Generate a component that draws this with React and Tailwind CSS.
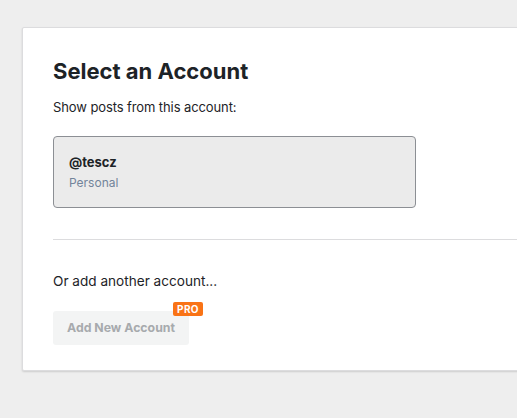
export default function App() {
  return (
    <div className="w-[517px] h-[418px] overflow-hidden bg-[#eeeeee] pt-[27px] pl-[22px] font-['Inter','Liberation_Sans',Arial,sans-serif]">
      <div className="w-[600px] h-[344px] bg-white border border-[#dcdcde] rounded-[2px] shadow-[0_1px_2px_rgba(0,0,0,0.14)] pl-[30px] pt-[29px]">
        <h2 className="text-[22px] leading-[28px] font-bold text-[#1d2327]">Select an Account</h2>
        <p className="mt-[12px] text-[13px] leading-[20px] text-[#1d2327] tracking-[-0.1px]">Show posts from this account:</p>
        <div className="mt-[19px] w-[363px] h-[72px] bg-[#ebebeb] border border-[#8c8f94] rounded-[4px] pl-[15px] pt-[15px]">
          <div className="text-[13px] leading-[20px] font-bold text-[#1d2327]">@tescz</div>
          <div className="mt-[2px] text-[12px] leading-[18px] text-[#72849a]">Personal</div>
        </div>
        <div className="mt-[31px] h-px bg-[#dcdcde]"></div>
        <p className="mt-[31px] text-[13.6px] leading-[20px] text-[#1d2327]">Or add another account...</p>
        <div className="relative mt-[20px] w-[136px]">
          <button className="w-[136px] h-[34px] bg-[#f3f4f4] rounded-[3px] text-[12.3px] font-bold text-[#a7aaad]">Add New Account</button>
          <span className="absolute left-[120px] top-[-9px] h-[14px] px-[4px] bg-[#f97316] rounded-[2px] text-white text-[10px] leading-[14px] font-bold tracking-[0.4px]">PRO</span>
        </div>
      </div>
    </div>
  );
}
